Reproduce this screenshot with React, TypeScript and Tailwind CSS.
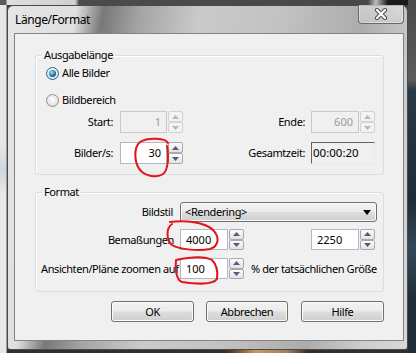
import React from 'react';

const F = "font-['Noto_Sans',sans-serif] text-[11px] tracking-[-0.4px] leading-[16px] text-black";

// Win7-style radio button
const Radio: React.FC<{ checked?: boolean }> = ({ checked }) => (
  <span
    className={`w-[13px] h-[13px] rounded-full border flex items-center justify-center ${
      checked
        ? 'border-[#2c628b] bg-[radial-gradient(circle_at_50%_40%,#ffffff,#c9d9e6)]'
        : 'border-[#8e8f8f] bg-[radial-gradient(circle_at_50%_40%,#ffffff,#d6d6d6)]'
    }`}
  >
    {checked && (
      <span className="w-[7px] h-[7px] rounded-full bg-[radial-gradient(circle_at_40%_35%,#a8dcf7,#1c6aa6_60%,#0c4674)]" />
    )}
  </span>
);

// up/down buttons beside a number field
const SpinArrows: React.FC<{ disabled?: boolean }> = ({ disabled }) => {
  const btn = disabled
    ? 'border-[#d2d2d2] bg-[#f3f3f3]'
    : 'border-[#a9a9a9] bg-[linear-gradient(#fbfbfb,#e3e3e3)]';
  const fill = disabled ? '#b9b9b9' : '#4a5f80';
  return (
    <div className="flex flex-col w-[15px] h-full">
      <div className={`flex-1 border rounded-[2px] flex items-center justify-center ${btn}`}>
        <svg width="7" height="4" viewBox="0 0 7 4">
          <path d="M0 4 L3.5 0 L7 4Z" fill={fill} />
        </svg>
      </div>
      <div className={`flex-1 border rounded-[2px] flex items-center justify-center ${btn}`}>
        <svg width="7" height="4" viewBox="0 0 7 4">
          <path d="M0 0 L3.5 4 L7 0Z" fill={fill} />
        </svg>
      </div>
    </div>
  );
};

const Spin: React.FC<{ value: string; w: string; disabled?: boolean; left?: boolean; h: string }> = ({
  value,
  w,
  disabled,
  left,
  h,
}) => (
  <div className={`flex gap-[1px] ${h}`}>
    <div
      className={`${w} border flex items-center tracking-normal ${left ? 'justify-start pl-[5px]' : 'justify-end pr-[5px]'} ${
        disabled ? 'border-[#c9c9c9] bg-[#f0f0f0] text-[#9a9a9a]' : 'border-[#b4b8c0] bg-white text-black'
      }`}
    >
      {value}
    </div>
    <SpinArrows disabled={disabled} />
  </div>
);

const Group: React.FC<{ title: string; className: string; children: React.ReactNode }> = ({ title, className, children }) => (
  <div className={`relative ml-[20px] w-[349px] rounded-[3px] border border-[#d5dfe5] shadow-[inset_1px_1px_0_#ffffff] ${className}`}>
    <span className="absolute -top-[9px] left-[6px] px-[2px] bg-[#f0f0f0]">{title}</span>
    {children}
  </div>
);

const btnCls =
  'h-[21px] rounded-[3px] border border-[#707070] bg-[linear-gradient(#f2f2f2_0%,#ebebeb_48%,#dddddd_52%,#cfcfcf_100%)] shadow-[inset_0_0_0_1px_#fbfbfb] flex items-center justify-center';

export default function App() {
  return (
    <div className={`relative w-[416px] h-[353px] overflow-hidden flex bg-[#3f3f3f] ${F}`}>
      {/* background: app behind the dialog */}
      <div className="w-[7px] h-full bg-[linear-gradient(#5a5a5a_0px,#5a5a5a_5px,#e6e6e6_5px,#e6e6e6_145px,#cfd6de_170px,#e8e8e8_195px,#e8e8e8_100%)] border-r border-[#9a9a9a]" />
      <div className="flex flex-col w-[401px]">
        <div className="h-[5px] bg-[linear-gradient(90deg,#dedede_0%,#d0d0d0_17%,#4b4b4b_18%,#474747_90%,#bdbdbd_92%,#1a1a1a_95%)]" />
        {/* dialog window */}
        <div className="h-[345px] flex flex-col rounded-t-[6px] rounded-b-[3px] border border-[#4a4a4a] pl-[6px] pr-[3px] pb-[8px] bg-[linear-gradient(100deg,#e6e6e6_0%,#dfdfdf_15%,#787878_21%,#a4a4a4_29%,#cacaca_42%,#c2c2c2_60%,#acacac_78%,#cdcdcd_90%,#d8d8d8_100%)]">
          <div className="h-[27px] flex items-start justify-between">
            <span className="ml-[1px] mt-[6px] text-[12px]">Länge/Format</span>
            <div className="-mt-[1px] w-[46px] h-[19px] rounded-b-[4px] border border-t-0 border-[#6a6a6a] bg-[linear-gradient(#ffffff66,#d8d8d888)] shadow-[inset_0_0_0_1px_#ffffff55] flex items-center justify-center">
              <svg width="14" height="12" viewBox="0 0 14 12">
                <path d="M3 2 L11 10 M11 2 L3 10" stroke="#4e4e4e" strokeWidth="4.2" strokeLinecap="round" />
                <path d="M3 2 L11 10 M11 2 L3 10" stroke="#ffffff" strokeWidth="2.2" strokeLinecap="round" />
              </svg>
            </div>
          </div>

          {/* client area */}
          <div className="w-[390px] h-[308px] border border-[#838383] bg-[#f0f0f0] flex flex-col">
            <Group title="Ausgabelänge" className="mt-[21px] h-[120px]">
              <div className="flex items-center h-[16px] mt-[9px] pl-[10px] gap-[3px]">
                <Radio checked />
                <span>Alle Bilder</span>
              </div>
              <div className="flex items-center h-[16px] mt-[11px] pl-[10px] gap-[3px]">
                <Radio />
                <span>Bildbereich</span>
              </div>
              <div className="flex items-center h-[22px] mt-[3px]">
                <span className="w-[77px] text-right">Start:</span>
                <div className="ml-[7px]">
                  <Spin value="1" w="w-[47px]" h="h-[22px]" disabled />
                </div>
                <span className="w-[122px] text-right">Ende:</span>
                <div className="ml-[6px]">
                  <Spin value="600" w="w-[48px]" h="h-[22px]" disabled />
                </div>
              </div>
              <div className="flex items-center h-[22px] mt-[9px]">
                <span className="w-[77px] text-right">Bilder/s:</span>
                <div className="ml-[7px]">
                  <Spin value="30" w="w-[47px]" h="h-[22px]" />
                </div>
                <span className="w-[122px] text-right">Gesamtzeit:</span>
                <div className="ml-[6px] w-[64px] h-[22px] border border-[#e8e8e8] border-t-[#646464] border-l-[#646464] flex items-center pl-[1px] text-[11.5px] tracking-normal">
                  00:00:20
                </div>
              </div>
            </Group>

            <Group title="Format" className="mt-[17px] h-[100px]">
              <div className="flex items-center h-[20px] mt-[9px]">
                <span className="w-[137px] text-right">Bildstil</span>
                <div className="ml-[7px] w-[197px] h-[20px] rounded-[3px] border border-[#707070] bg-[linear-gradient(#f2f2f2_0%,#ebebeb_48%,#dddddd_52%,#cfcfcf_100%)] shadow-[inset_0_0_0_1px_#fbfbfb] flex items-center justify-between pl-[4px] pr-[5px]">
                  <span>&lt;Rendering&gt;</span>
                  <svg width="8" height="5" viewBox="0 0 8 5">
                    <path d="M0 0 L8 0 L4 5Z" fill="#000" />
                  </svg>
                </div>
              </div>
              <div className="flex items-center h-[21px] mt-[7px]">
                <span className="w-[138px] text-right">Bemaßungen</span>
                <div className="ml-[6px]">
                  <Spin value="4000" w="w-[48px]" h="h-[21px]" left />
                </div>
                <div className="ml-[67px]">
                  <Spin value="2250" w="w-[48px]" h="h-[21px]" left />
                </div>
              </div>
              <div className="flex items-center h-[21px] mt-[8px]">
                <span className="w-[144px] pl-[5px] whitespace-nowrap">Ansichten/Pläne zoomen auf</span>
                <Spin value="100" w="w-[48px]" h="h-[21px]" left />
                <span className="ml-[7px] whitespace-nowrap">% der tatsächlichen Größe</span>
              </div>
            </Group>

            <div className="ml-[20px] w-[349px] mt-[9px] flex justify-end gap-[12px]">
              <div className={`w-[83px] ${btnCls}`}>OK</div>
              <div className={`w-[82px] ${btnCls}`}>Abbrechen</div>
              <div className={`w-[83px] ml-[1px] ${btnCls}`}>Hilfe</div>
            </div>
          </div>
        </div>
        <div className="flex-1 bg-[linear-gradient(90deg,#2e2e2e_0%,#2e2e2e_54%,#5a3a22_56%,#c89a5a_62%,#9a8060_70%,#3a2a20_75%,#2e2e2e_80%)]" />
      </div>
      <div className="flex-1 bg-[linear-gradient(#4a4a4a_0px,#5c5c5c_80px,#2a3a46_90px,#1e2d38_200px,#33495a_250px,#1e2d38_300px)]" />

      {/* red hand-drawn marks */}
      <svg className="absolute inset-0 pointer-events-none" width="416" height="353" viewBox="0 0 416 353">
        <g fill="none" stroke="#e3141b" strokeWidth="2" strokeLinecap="round">
          <path d="M168 143 C166 138, 148 137, 140 142 C133 148, 134 165, 142 172 C150 178, 163 178, 166 170 C169 162, 168 150, 167 146" />
          <path d="M170 222 C185 220, 205 222, 213 230 C220 237, 219 246, 210 249 C200 251, 180 250, 172 245 C166 240, 166 228, 172 224" />
          <path d="M176 260 C190 257, 205 256, 212 260 C217 265, 218 272, 217 279 C213 285, 195 284, 182 282 C176 280, 175 268, 176 260" />
        </g>
      </svg>
    </div>
  );
}
